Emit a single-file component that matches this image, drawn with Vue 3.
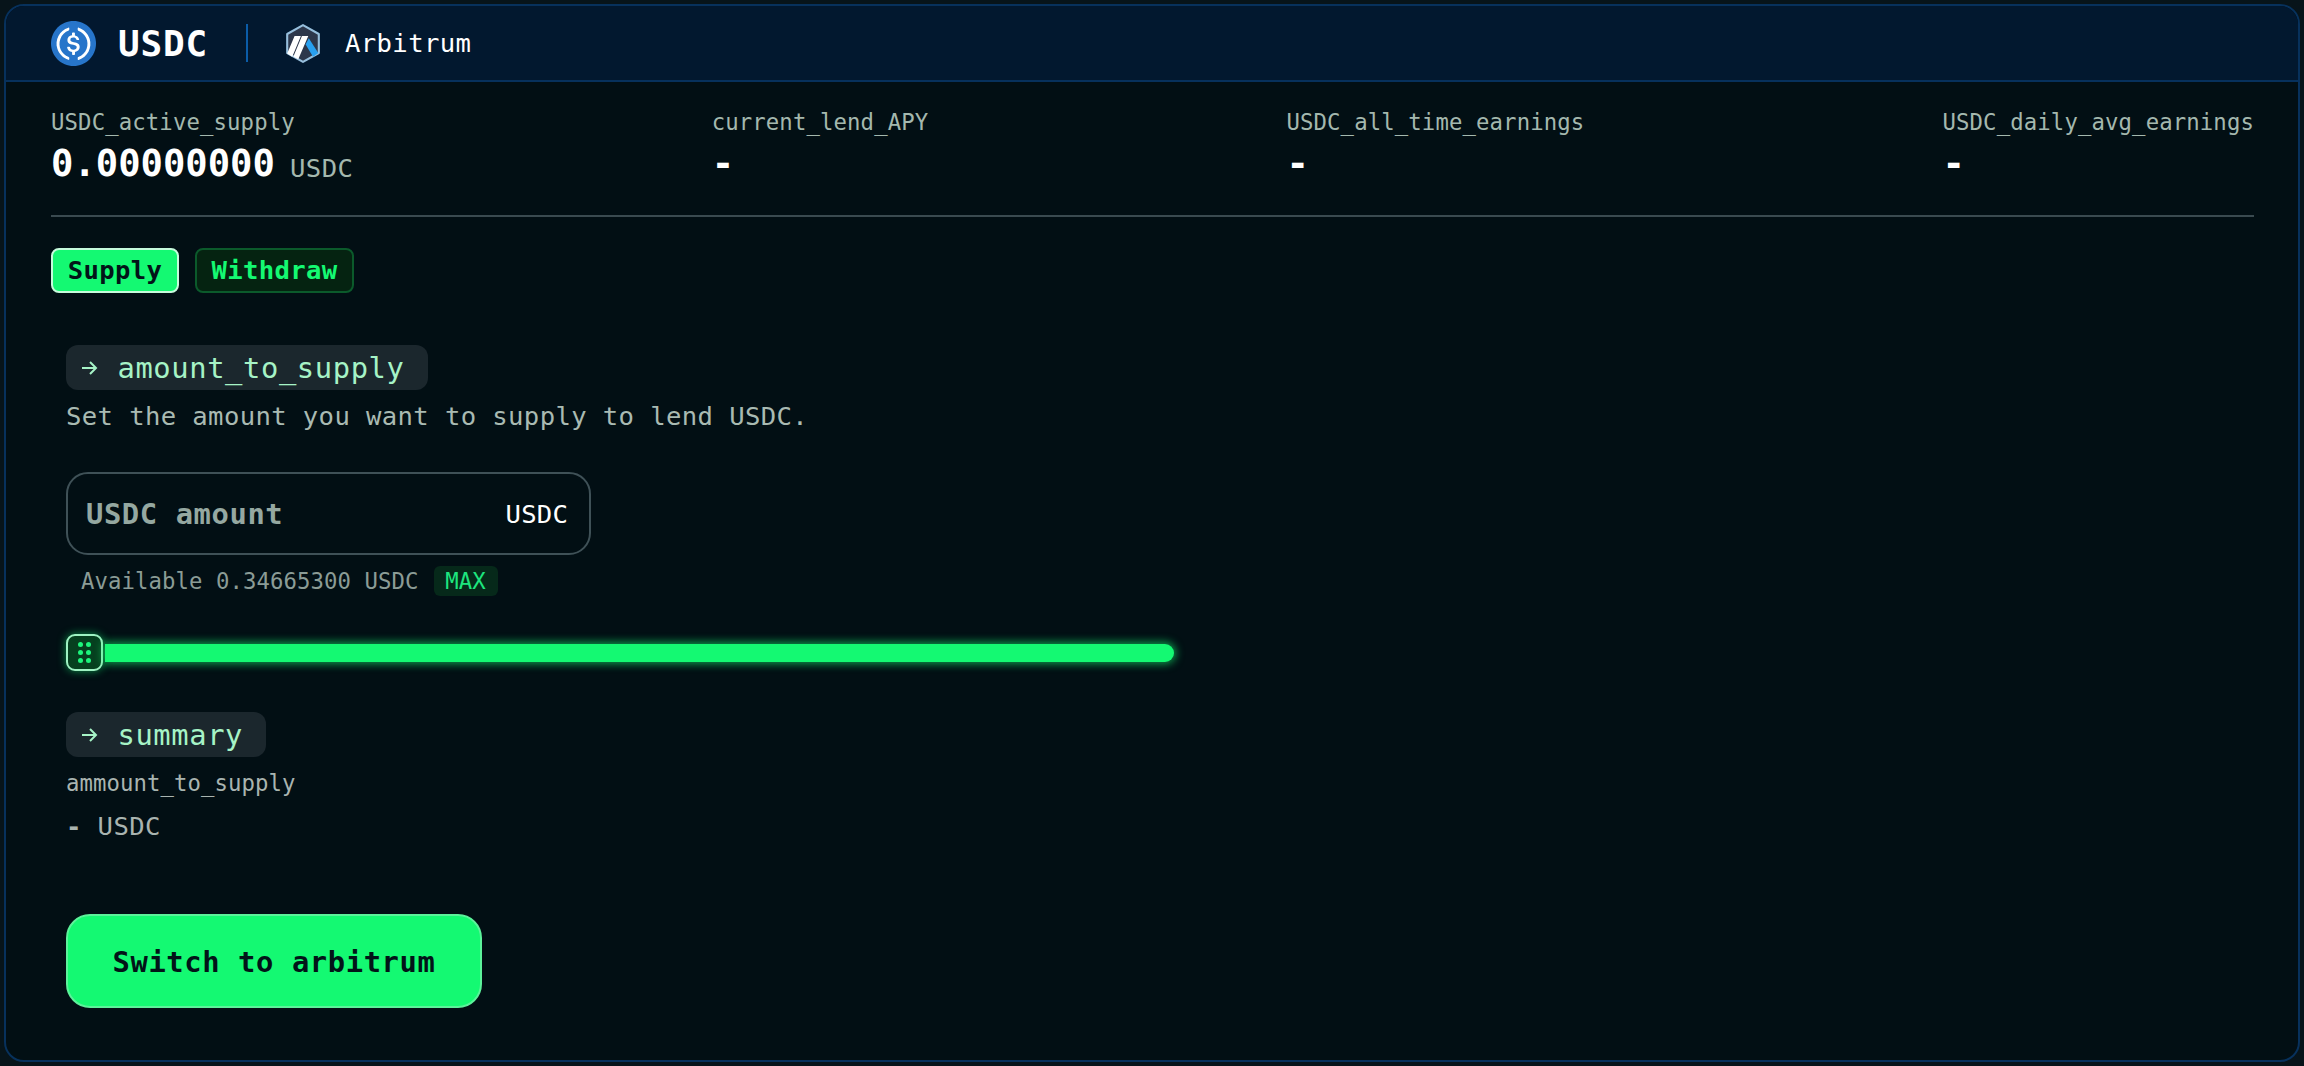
<script setup>
const stats = [
  { label: 'USDC_active_supply', value: '0.00000000', unit: 'USDC' },
  { label: 'current_lend_APY', value: '-' },
  { label: 'USDC_all_time_earnings', value: '-' },
  { label: 'USDC_daily_avg_earnings', value: '-' },
]
</script>

<template>
  <div class="card">
    <header class="head">
      <svg class="usdc" viewBox="0 0 2000 2000">
        <path d="M1000 2000c554.17 0 1000-445.83 1000-1000S1554.17 0 1000 0 0 445.83 0 1000s445.83 1000 1000 1000z" fill="#2775ca"/>
        <path d="M1275 1158.33c0-145.83-87.5-195.83-262.5-216.66-125-16.67-150-50-150-108.34s41.67-95.83 125-95.83c75 0 116.67 25 137.5 87.5 4.17 12.5 16.67 20.83 29.17 20.83h66.66c16.67 0 29.17-12.5 29.17-29.16v-4.17c-16.67-91.67-91.67-162.5-187.5-170.83v-100c0-16.67-12.5-29.17-33.33-33.34h-62.5c-16.67 0-29.17 12.5-33.34 33.34v95.83c-125 16.67-204.16 100-204.16 204.17 0 137.5 83.33 191.66 258.33 212.5 116.67 20.83 154.17 45.83 154.17 112.5s-58.34 112.5-137.5 112.5c-108.34 0-145.84-45.84-158.34-108.34-4.16-16.66-16.66-25-29.16-25h-70.84c-16.66 0-29.16 12.5-29.16 29.17v4.17c16.66 104.16 83.33 179.16 220.83 200v100c0 16.66 12.5 29.16 33.33 33.33h62.5c16.67 0 29.17-12.5 33.34-33.33v-100c125-20.84 208.33-108.34 208.33-220.84z" fill="#fff"/>
        <path d="M787.5 1595.83c-325-116.66-491.67-479.16-370.83-800 62.5-175 200-308.33 370.83-370.83 16.67-8.33 25-20.83 25-41.67V325c0-16.67-8.33-29.17-25-33.33-4.17 0-12.5 0-16.67 4.16-395.83 125-612.5 545.84-487.5 941.67 75 233.33 254.17 412.5 487.5 487.5 16.67 8.33 33.34 0 37.5-16.67 4.17-4.16 4.17-8.33 4.17-16.66v-58.34c0-12.5-12.5-29.16-25-37.5zM1229.17 295.83c-16.67-8.33-33.34 0-37.5 16.67-4.17 4.17-4.17 8.33-4.17 16.67v58.33c0 16.67 12.5 33.33 25 41.67 325 116.66 491.67 479.16 370.83 800-62.5 175-200 308.33-370.83 370.83-16.67 8.33-25 20.83-25 41.67V1700c0 16.67 8.33 29.17 25 33.33 4.17 0 12.5 0 16.67-4.16 395.83-125 612.5-545.84 487.5-941.67-75-237.5-258.34-416.67-487.5-491.67z" fill="#fff"/>
      </svg>
      <span class="token">USDC</span>
      <span class="divider"></span>
      <svg class="arb" viewBox="0 0 32 37">
        <path d="M16 1 31 9.5v18L16 36 1 27.5v-18z" fill="#2d374b" stroke="#96bedc" stroke-width="2" stroke-linejoin="round"/>
        <path d="M21.5 13.5 30.5 27.5 25.5 31 18.5 19.5z" fill="#28a0f0"/>
        <path d="M8 11.5h6L5.8 31 1 28zM15 11.5h6L11.5 33.5 6.8 31z" fill="#fff"/>
      </svg>
      <span class="chain">Arbitrum</span>
    </header>

    <main class="body">
      <section class="stats">
        <div v-for="s in stats" :key="s.label" class="stat">
          <div class="stat-label">{{ s.label }}</div>
          <div class="stat-value">{{ s.value }}<span v-if="s.unit" class="stat-unit">{{ s.unit }}</span></div>
        </div>
      </section>

      <nav class="tabs">
        <button class="tab on">Supply</button>
        <button class="tab">Withdraw</button>
      </nav>

      <section class="form">
        <div class="pill">
          <svg class="arrow" viewBox="0 0 17 14"><path d="M1 7h14M9 1l6 6-6 6" fill="none" stroke="currentColor" stroke-width="2"/></svg>
          amount_to_supply
        </div>
        <p class="desc">Set the amount you want to supply to lend USDC.</p>

        <div class="field">
          <span class="ph">USDC amount</span>
          <span class="suffix">USDC</span>
        </div>
        <div class="avail">
          <span>Available 0.34665300 USDC</span>
          <span class="max">MAX</span>
        </div>

        <div class="slider">
          <div class="thumb"><i v-for="n in 6" :key="n"></i></div>
          <div class="track"></div>
        </div>

        <div class="pill">
          <svg class="arrow" viewBox="0 0 17 14"><path d="M1 7h14M9 1l6 6-6 6" fill="none" stroke="currentColor" stroke-width="2"/></svg>
          summary
        </div>
        <div class="sum-label">ammount_to_supply</div>
        <div class="sum-value"><b>-</b> USDC</div>

        <button class="switch">Switch to arbitrum</button>
      </section>
    </main>
  </div>
</template>

<style>
html, body { margin: 0; background: #07141a; }
</style>

<style scoped>
.card {
  box-sizing: border-box;
  width: 2296px;
  height: 1058px;
  margin: 4px;
  border: 2px solid #07315c;
  border-radius: 20px;
  background: #020f14;
  overflow: hidden;
  font-family: "DejaVu Sans Mono", "Liberation Mono", monospace;
  color: #fff;
}
.head {
  box-sizing: border-box;
  height: 76px;
  display: flex;
  align-items: center;
  padding: 0 0 0 45px;
  background: #02182f;
  border-bottom: 2px solid #07315c;
}
.usdc { width: 45px; height: 45px; flex: none; }
.token { margin-left: 22px; font-size: 36px; font-weight: 700; letter-spacing: 0.8px; }
.divider { width: 2px; height: 38px; background: #0b5ca8; margin: 0 38px; }
.arb { width: 34px; height: 39px; flex: none; }
.chain { margin-left: 25px; font-size: 25.6px; letter-spacing: 0.4px; }

.body { padding: 0 44px 0 45px; }
.stats {
  display: flex;
  justify-content: space-between;
  height: 135px;
  box-sizing: border-box;
  padding-top: 26px;
  border-bottom: 2px solid #3a4a50;
}
.stat { min-width: 302px; }
.stat:nth-child(n+2) { min-width: 0; }
.stat-label { font-size: 22.3px; line-height: 28px; letter-spacing: 0.12px; color: #a4b8ae; }
.stat-value { font-size: 37.2px; line-height: 44px; font-weight: 700; margin-top: 5px; }
.stat-unit { font-size: 25.6px; font-weight: 400; color: #a4b8ae; margin-left: 15px; letter-spacing: 0.5px; vertical-align: -1px; }

.tabs { display: flex; gap: 16px; margin-top: 31px; }
.tab {
  box-sizing: border-box;
  height: 45px;
  padding: 0;
  border-radius: 8px;
  border: 2px solid #0b5a2b;
  background: #052311;
  color: #14f972;
  font: 700 25.6px/1 "DejaVu Sans Mono", monospace;
  letter-spacing: 0.35px;
  width: 159px;
}
.tab.on { width: 128px; background: #14f972; color: #021418; border-color: #c6fbdc; }

.form { padding-left: 15px; margin-top: 52px; }
.pill {
  box-sizing: border-box;
  height: 45px;
  display: inline-flex;
  align-items: center;
  padding: 0 23px 0 15px;
  background: #1b272d;
  border-radius: 12px;
  color: #a6f3c6;
  font-size: 28.8px;
  letter-spacing: 0.6px;
}
.arrow { width: 17px; height: 14px; flex: none; margin-right: 19.5px; }
.desc {
  margin: 8px 0 0;
  font-size: 25.6px;
  line-height: 36px;
  letter-spacing: 0.38px;
  color: #a9bab2;
}
.field {
  box-sizing: border-box;
  width: 525px;
  height: 83px;
  margin-top: 38px;
  padding: 0 21px 0 18px;
  display: flex;
  align-items: center;
  justify-content: space-between;
  border: 2px solid #3f5157;
  border-radius: 22px;
}
.ph { font-size: 28.8px; font-weight: 700; color: #95a8a1; letter-spacing: 0.6px; }
.suffix { font-size: 25.6px; letter-spacing: 0.2px; }
.avail {
  display: flex;
  align-items: center;
  gap: 15px;
  margin-top: 11px;
  padding-left: 15px;
  font-size: 22.3px;
  letter-spacing: 0.08px;
  color: #8b9c96;
}
.max {
  box-sizing: border-box;
  width: 64px;
  height: 30px;
  line-height: 30px;
  text-align: center;
  background: #06291a;
  border-radius: 6px;
  color: #1de57e;
}
.slider { display: flex; align-items: center; gap: 2px; margin-top: 38px; }
.thumb {
  box-sizing: border-box;
  width: 37px;
  height: 37px;
  padding: 6px 10px;
  display: grid;
  grid-template-columns: 5px 5px;
  grid-auto-rows: 5px;
  justify-content: space-between;
  align-content: space-between;
  border: 2px solid #9ef2c2;
  border-radius: 9px;
  background: #06401f;
  box-shadow: 0 0 8px rgba(20, 249, 114, 0.55);
}
.thumb i { width: 5px; height: 5px; border-radius: 50%; background: #1df57c; }
.track {
  width: 1069px;
  height: 18px;
  border-radius: 0 9px 9px 0;
  background: #14f972;
  box-shadow: 0 0 9px 2px rgba(20, 249, 114, 0.6);
}
.form .slider + .pill { margin-top: 41px; }
.sum-label { margin-top: 11px; font-size: 22.3px; line-height: 30px; letter-spacing: 0.08px; color: #a9b4b0; }
.sum-value { margin-top: 12px; font-size: 25.6px; line-height: 32px; letter-spacing: 0.4px; color: #a9b4b0; }
.switch {
  display: block;
  box-sizing: border-box;
  width: 416px;
  height: 94px;
  margin-top: 72px;
  padding: 2px 0 0;
  border: 2px solid #5cf29a;
  border-radius: 24px;
  background: #14f972;
  color: #021418;
  font: 700 28.8px/1 "DejaVu Sans Mono", monospace;
  letter-spacing: 0.6px;
}
</style>
